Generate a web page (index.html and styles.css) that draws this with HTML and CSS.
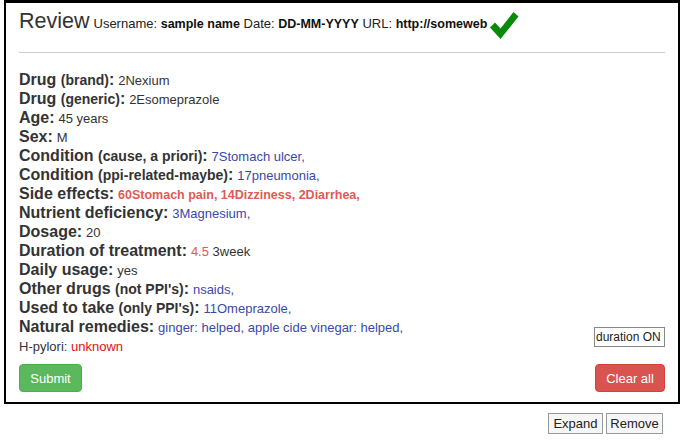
FILE: index.html
```html
<!DOCTYPE html>
<html>
<head>
<meta charset="utf-8">
<link rel="stylesheet" href="styles.css">
</head>
<body>
<div class="panel">
  <div class="header">
    <span class="title">Review</span>
    <span class="meta">Username: <b>sample name</b> Date: <b>DD-MM-YYYY</b> URL: <b>http://someweb</b></span>
    <svg class="check" width="30" height="29" viewBox="0 0 30 29"><path d="M1 16.5 L6 11.5 L11.5 17.5 L24.5 1 L29.5 5.5 L11.5 28 Z" fill="#0a8a0a"/></svg>
  </div>
  <div class="rule"></div>
  <div class="rows">
    <div class="row"><span class="lbl">Drug <small>(brand)</small>:</span> <span class="val">2Nexium</span></div>
    <div class="row"><span class="lbl">Drug <small>(generic)</small>:</span> <span class="val">2Esomeprazole</span></div>
    <div class="row"><span class="lbl">Age:</span> <span class="val">45 years</span></div>
    <div class="row"><span class="lbl">Sex:</span> <span class="val">M</span></div>
    <div class="row"><span class="lbl">Condition <small>(cause, a priori)</small>:</span> <span class="val blue">7Stomach ulcer,</span></div>
    <div class="row"><span class="lbl">Condition <small>(ppi-related-maybe)</small>:</span> <span class="val blue">17pneumonia,</span></div>
    <div class="row"><span class="lbl">Side effects:</span> <span class="val red-b">60Stomach pain, 14Dizziness, 2Diarrhea,</span></div>
    <div class="row"><span class="lbl">Nutrient deficiency:</span> <span class="val blue">3Magnesium,</span></div>
    <div class="row"><span class="lbl">Dosage:</span> <span class="val">20</span></div>
    <div class="row"><span class="lbl">Duration of treatment:</span> <span class="val"><span class="red">4.5</span> 3week</span></div>
    <div class="row"><span class="lbl">Daily usage:</span> <span class="val">yes</span></div>
    <div class="row"><span class="lbl">Other drugs <small>(not PPI's)</small>:</span> <span class="val blue">nsaids,</span></div>
    <div class="row"><span class="lbl">Used to take <small>(only PPI's)</small>:</span> <span class="val blue">11Omeprazole,</span></div>
    <div class="last">
      <div class="last-left">
        <div class="row"><span class="lbl">Natural remedies:</span> <span class="val blue">ginger: helped, apple cide vinegar: helped,</span></div>
        <div class="row small-row"><span class="val">H-pylori: <span class="bright">unknown</span></span></div>
      </div>
      <input class="dur" type="text" value="duration ON">
    </div>
  </div>
  <div class="actions">
    <button class="btn green">Submit</button>
    <button class="btn redbtn">Clear all</button>
  </div>
</div>
<div class="tools">
  <button class="tool expand">Expand</button><button class="tool remove">Remove</button>
</div>
</body>
</html>
```
FILE: styles.css
```css
html, body { margin: 0; padding: 0; background: #fff; }
body { font-family: "Liberation Sans", Arial, sans-serif; color: #333; }
.panel {
  margin: 0 7px 0 4px;
  border: 2px solid #000;
  border-top-width: 3px;
  padding: 3px 13px 10px 13px;
}
.header { display: flex; align-items: flex-end; height: 28px; }
.title { font-size: 21.5px; color: #333; line-height: 26px; margin-right: 4px; }
.meta { font-size: 13px; color: #222; line-height: 20px; }
.meta b { color: #111; font-size: 12.5px; }
.check { margin-left: 2px; margin-bottom: -6px; }
.rule { border-top: 1px solid #ccc; margin: 18px 0 18px 0; }
.rows { display: flex; flex-direction: column; }
.row { line-height: 19px; height: 19px; font-size: 14px; white-space: nowrap; }
.row > span { line-height: 1; }
.lbl { font-size: 16px; font-weight: bold; color: #333; }
.lbl small { font-size: 14px; }
.val { font-size: 13px; color: #333; }
.blue { color: #3a49a8; }
.red-b { color: #e05a56; font-weight: bold; font-size: 12.5px; }
.red { color: #e05a56; }
.bright { color: #e01010; }
.small-row .val { font-size: 13px; color: #333; }
.last { display: flex; justify-content: space-between; align-items: center; }
.dur {
  box-sizing: border-box; width: 71px; height: 20px; padding: 0 1px;
  border: 1px solid #888; font-family: "Liberation Sans", Arial, sans-serif;
  font-size: 12px; color: #222; margin: 0; outline: none;
}
.actions { display: flex; justify-content: space-between; margin-top: 8px; }
.btn {
  box-sizing: border-box; border: 1px solid transparent; border-radius: 4px; color: #fff;
  font-family: "Liberation Sans", Arial, sans-serif; font-size: 13px;
  height: 28px; padding: 0; white-space: nowrap;
}
.green { background: #5cb85c; border-color: #4cae4c; width: 63px; }
.redbtn { background: #d9534f; border-color: #d43f3a; width: 70px; }
.tools { display: flex; justify-content: flex-end; margin: 9px 24px 0 0; gap: 3px; }
.tool {
  box-sizing: border-box; font-family: "Liberation Sans", Arial, sans-serif; font-size: 13px; color: #222;
  background: #f6f6f6; border: 1px solid #999; border-radius: 0;
  height: 21px; padding: 0;
}
.expand { width: 55px; }
.remove { width: 57px; }
```
